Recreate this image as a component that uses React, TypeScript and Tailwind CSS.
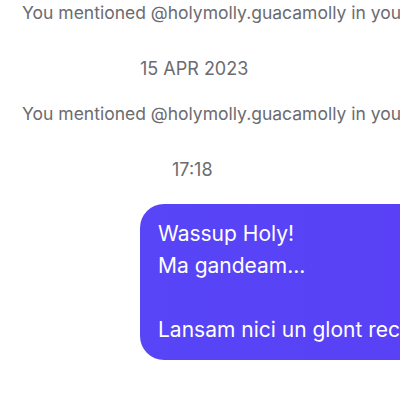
export default function App() {
  return (
    <div className="w-[400px] h-[400px] overflow-hidden bg-white" style={{ fontFamily: 'Inter, "Noto Sans", sans-serif' }}>
      <div className="flex flex-col items-start -mt-[1px]">
        <div className="pl-[22px] text-[17.5px] leading-[28px] text-[#6b6b70] whitespace-nowrap">You mentioned @holymolly.guacamolly in your story</div>
        <div className="pl-[140px] mt-[28px] text-[18px] leading-[28px] text-[#6b6b70] whitespace-nowrap">15 APR 2023</div>
        <div className="pl-[22px] mt-[17px] text-[17.5px] leading-[28px] text-[#6b6b70] whitespace-nowrap">You mentioned @holymolly.guacamolly in your story</div>
        <div className="pl-[172px] mt-[28px] text-[18px] leading-[28px] text-[#6b6b70] whitespace-nowrap">17:18</div>
        <div className="ml-[140px] mt-[20px] w-[300px] h-[156px] rounded-[24px] bg-gradient-to-r from-[#5745f6] to-[#5a40f6] pl-[18px] pt-[14px] text-white text-[21px] leading-[32px] whitespace-nowrap">
          <div>Wassup Holy!</div>
          <div>Ma gandeam...</div>
          <div>&nbsp;</div>
          <div>Lansam nici un glont rece</div>
        </div>
      </div>
    </div>
  );
}
